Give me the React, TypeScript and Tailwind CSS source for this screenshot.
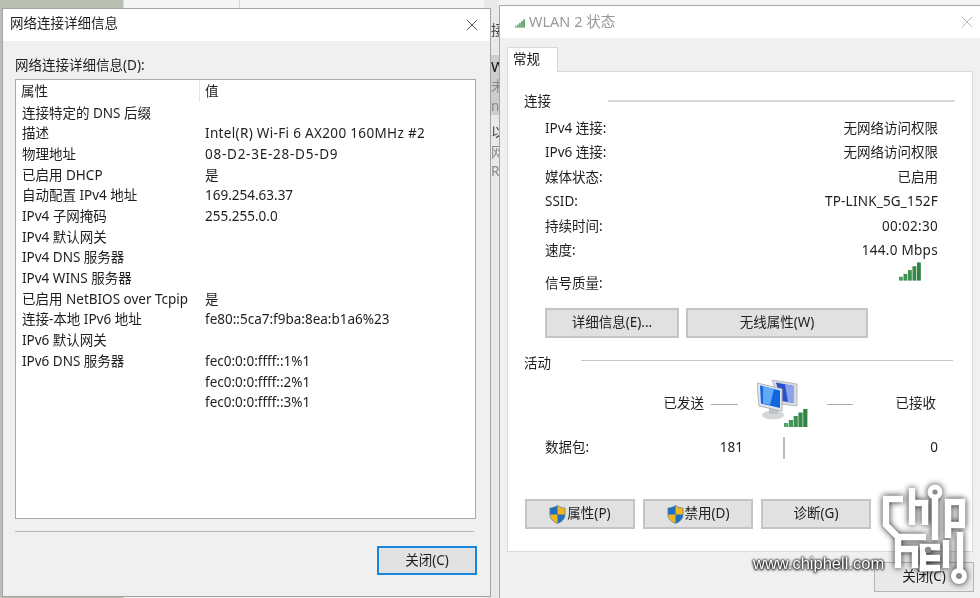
import React from "react";
import { X } from "lucide-react";

// third value: extra letter spacing, the reference's Latin runs a bit wider here
const DETAILS: [string, string, string][] = [
  ["连接特定的 DNS 后缀", "", ""],
  ["描述", "Intel(R) Wi-Fi 6 AX200 160MHz #2", "tracking-[0.33px]"],
  ["物理地址", "08-D2-3E-28-D5-D9", "tracking-[0.75px]"],
  ["已启用 DHCP", "是", ""],
  ["自动配置 IPv4 地址", "169.254.63.37", ""],
  ["IPv4 子网掩码", "255.255.0.0", ""],
  ["IPv4 默认网关", "", ""],
  ["IPv4 DNS 服务器", "", ""],
  ["IPv4 WINS 服务器", "", ""],
  ["已启用 NetBIOS over Tcpip", "是", ""],
  ["连接-本地 IPv6 地址", "fe80::5ca7:f9ba:8ea:b1a6%23", ""],
  ["IPv6 默认网关", "", ""],
  ["IPv6 DNS 服务器", "fec0:0:0:ffff::1%1", ""],
  ["", "fec0:0:0:ffff::2%1", ""],
  ["", "fec0:0:0:ffff::3%1", ""],
];

const STATUS: [string, string, string][] = [
  ["IPv4 连接:", "无网络访问权限", ""],
  ["IPv6 连接:", "无网络访问权限", ""],
  ["媒体状态:", "已启用", ""],
  ["SSID:", "TP-LINK_5G_152F", "tracking-[0.2px]"],
  ["持续时间:", "00:02:30", "tracking-[0.3px]"],
  ["速度:", "144.0 Mbps", "tracking-[0.3px]"],
];

function Bars({ className }: { className: string }) {
  return (
    <svg viewBox="0 0 23 19" className={className}>
      <rect x="0" y="15" width="4" height="4" fill="#4c9a5c" />
      <rect x="4.7" y="12" width="4" height="7" fill="#3f9152" />
      <rect x="9.4" y="8" width="4" height="11" fill="#3f9152" />
      <rect x="14.1" y="4" width="4" height="15" fill="#358a49" />
      <rect x="18.8" y="0" width="4" height="19" fill="#2f8443" />
    </svg>
  );
}

function Shield() {
  return (
    <svg viewBox="0 0 16 18" className="w-[17px] h-[19px] shrink-0">
      <path d="M8 0.5 C6 2 3.5 2.8 0.8 3 V9 C0.8 13 4 16 8 17.5 C12 16 15.2 13 15.2 9 V3 C12.5 2.8 10 2 8 0.5 Z" fill="#f3b71c" stroke="#5a7ea8" strokeWidth="0.7" />
      <path d="M8 0.8 C6 2 3.5 2.8 1 3.1 V9 H8 Z" fill="#1f6fc4" />
      <path d="M8 9 H15 C15 13 12 16 8 17.3 Z" fill="#1f6fc4" />
    </svg>
  );
}

function NetworkIcon() {
  return (
    <svg viewBox="0 0 52 48" className="w-[52px] h-[48px]">
      <path d="M15 0 L40 4 V26 L24 24 Z" fill="#d8dde2" stroke="#b3b9c0" />
      <path d="M19 2.5 L37 6 V23 L24 21 Z" fill="#2c50c8" />
      <path d="M28 4.5 L37 6 V23 L31 22 Z" fill="#8aa5ec" />
      <ellipse cx="16" cy="35" rx="11" ry="4.5" fill="#d4d6d8" />
      <rect x="12" y="27" width="9" height="7" fill="#bfc3c7" />
      <path d="M0 3 L25 9 V31 L2 26 Z" fill="#e3e6ea" stroke="#aeb4bb" />
      <path d="M3 5.5 L23 10.5 V28 L4 23.5 Z" fill="#0f66e0" />
      <path d="M6 6.5 L17 9 L13 25 L6 23.5 Z" fill="#62a9f6" />
      <g transform="translate(27 29)">
        <rect x="0" y="14" width="4.2" height="4" fill="#59a468" />
        <rect x="4.8" y="11" width="4.2" height="7" fill="#46985a" />
        <rect x="9.6" y="7" width="4.2" height="11" fill="#3f9152" />
        <rect x="14.4" y="3.5" width="4.2" height="14.5" fill="#358a49" />
        <rect x="19.2" y="0" width="4.2" height="18" fill="#2f8443" />
      </g>
    </svg>
  );
}

function Logo() {
  return (
    <svg viewBox="0 0 110 128" className="w-[110px] h-[128px] drop-shadow-[0_0_3px_rgba(0,0,0,0.9)]">
      <g fill="none" stroke="#fff" strokeWidth="6.5">
        <path d="M33 29 H16 V55 L28 67 V98" />
        <path d="M42 18 V55 M42 33 H55 V55" />
        <path d="M65 22 V70" />
        <path d="M78 68 V32 H92 V55 H78" />
        <path d="M28 67 H56 M28 79 H45 V98" />
        <path d="M51 88 H70 M70 77 H53 V98 H70" />
        <path d="M76 70 V98" />
        <path d="M90 62 V104" />
      </g>
      <circle cx="65" cy="22" r="7.5" fill="#fff" />
      <circle cx="65" cy="22" r="2.6" fill="#8a8a8a" />
      <circle cx="58" cy="80" r="3.2" fill="#8a8a8a" />
      <circle cx="89" cy="106" r="8" fill="#fff" />
      <circle cx="89" cy="106" r="3" fill="#8a8a8a" />
    </svg>
  );
}

function Btn({ children, className }: { children: React.ReactNode; className: string }) {
  return (
    <div className={`h-[30px] flex items-center justify-center gap-px bg-[#e1e1e1] border-2 border-[#c4c4c4] text-[#222] ${className}`}>
      {children}
    </div>
  );
}

export default function App() {
  return (
    <div className="relative w-[980px] h-[598px] overflow-hidden bg-[#f4f4f4] text-[13.5px] leading-none text-[#1e1e1e] font-['Noto_Sans','Noto_Sans_CJK_SC',sans-serif] blur-[0.35px]">
      {/* desktop behind the two dialogs */}
      <div className="absolute left-0 top-0 w-[124px] h-[598px] border-r border-[#d8d8d8] bg-[#b9c0b2]" />
      <div className="absolute left-[124px] top-0 w-[116px] h-[8px] border-r border-[#d8d8d8]" />
      <div className="absolute left-[484px] top-0 w-[15px] h-[598px] flex flex-col items-start pl-[7px] bg-[#e9e9e9] text-[#444] overflow-hidden">
        <div className="h-[55px] pt-[24px]">接</div>
        <div className="w-[15px] h-[60px] -ml-[7px] pl-[7px] pt-[4px] flex flex-col gap-[6px] bg-[#cdcdcd]">
          <span className="text-[#111] text-[15px]">W</span>
          <span className="text-[#888]">未</span>
          <span className="text-[#888]">nt</span>
        </div>
        <div className="pt-[11px] flex flex-col gap-[6px]">
          <span>以</span>
          <span className="text-[#888]">网</span>
          <span className="text-[#888]">Re</span>
        </div>
      </div>

      {/* 网络连接详细信息 */}
      <div className="absolute left-[2px] top-[8px] w-[489px] h-[589px] flex flex-col bg-[#f0f0f0] border border-[#a3a3a3]">
        <div className="h-[32px] shrink-0 flex items-center justify-between pl-[7px] pr-[8px] bg-white">
          <span className="pb-[2px]">网络连接详细信息</span>
          <X size={20} strokeWidth={1} className="text-[#333]" />
        </div>
        <div className="flex-1 flex flex-col px-[12px]">
          <div className="h-[38px] shrink-0 flex items-end pb-[7px]">网络连接详细信息(D):</div>
          <div className="h-[440px] w-[461px] shrink-0 bg-white border border-[#a9a9a9] flex flex-col">
            <div className="h-[22px] shrink-0 flex items-center">
              <span className="w-[184px] pl-[5px] pt-[2px] border-r border-[#e5e5e5] h-full flex items-center">属性</span>
              <span className="pl-[5px] pt-[2px]">值</span>
            </div>
            <div className="flex flex-col pt-px">
              {DETAILS.map(([k, v, track], i) => (
                <div key={i} className="h-[20.7px] flex items-center">
                  <span className="w-[183px] pl-[6px] whitespace-nowrap">{k}</span>
                  <span className={`pl-[6px] whitespace-nowrap ${track}`}>{v}</span>
                </div>
              ))}
            </div>
          </div>
          <div className="w-[459px] h-px mt-[12px] bg-[#b5b5b5]" />
          <div className="flex justify-end mt-[14px] w-[462px]">
            <div className="w-[100px] h-[29px] flex items-center justify-center bg-[#e1e1e1] border-2 border-[#1a85dc]">关闭(C)</div>
          </div>
        </div>
      </div>

      {/* WLAN 2 状态 */}
      <div className="absolute left-[499px] top-[5px] w-[490px] h-[600px] flex flex-col bg-[#f0f0f0] border border-[#a8a8a8]">
        <div className="h-[32px] shrink-0 flex items-center justify-between pl-[15px] pr-[15px] bg-white text-[#999]">
          <span className="flex items-center gap-[4px] pb-[2px]">
            <Bars className="w-[10px] h-[9px] opacity-80 mt-[5px]" />
            <span className="text-[14.5px]">WLAN 2 状态</span>
          </span>
          <X size={20} strokeWidth={1} className="text-[#aaa] mr-[-4px]" />
        </div>
        <div className="flex flex-col pl-[7px] pt-[9px]">
          <div className="w-[51px] h-[25px] -mb-px z-10 flex items-center pl-[5px] bg-white border border-b-0 border-[#d9d9d9]">常规</div>
          <div className="w-[466px] h-[481px] bg-white border border-[#d9d9d9] flex flex-col pl-[16px]">
            <div className="h-[29px] mt-[15px] flex items-start">
              <span className="pt-[8px] w-[84px]">连接</span>
              <div className="w-[347px] h-[2px] mt-[13px] bg-[#d8d8d8]" />
            </div>
            <div className="flex flex-col pl-[21px] w-[414px]">
              {STATUS.map(([k, v, track]) => (
                <div key={k} className="h-[24.5px] flex items-center justify-between">
                  <span>{k}</span>
                  <span className={track}>{v}</span>
                </div>
              ))}
              <div className="h-[32px] flex justify-between">
                <span className="pt-[14px]">信号质量:</span>
                <Bars className="w-[22px] h-[19px] mr-[17px] -mt-px" />
              </div>
              <div className="flex gap-[7px] mt-[13px]">
                <Btn className="w-[134px]">详细信息(E)...</Btn>
                <Btn className="w-[182px]">无线属性(W)</Btn>
              </div>
            </div>
            <div className="h-[20px] mt-[16px] flex items-center">
              <span className="w-[57px]">活动</span>
              <div className="w-[372px] h-px -mt-[8px] bg-[#c8c8c8]" />
            </div>
            <div className="flex items-center h-[48px] ml-[21px] w-[393px] mt-[6px]">
              <span className="w-[159px] text-right">已发送</span>
              <div className="w-[27px] h-px ml-[7px] bg-[#aaa]" />
              <div className="ml-[19px]"><NetworkIcon /></div>
              <div className="w-[26px] h-px ml-[18px] bg-[#aaa]" />
              <span className="ml-auto mr-[2px]">已接收</span>
            </div>
            <div className="flex items-center h-[24px] ml-[21px] w-[393px] mt-[8px]">
              <span className="w-[198px] text-left">数据包:</span>
              <span className="w-0 flex justify-end">181</span>
              <div className="w-[2px] h-[22px] ml-[40px] bg-[#bbb]" />
              <span className="ml-auto">0</span>
            </div>
            <div className="flex gap-[8px] mt-[39px] pl-px">
              <Btn className="w-[110px]"><Shield />属性(P)</Btn>
              <Btn className="w-[110px]"><Shield />禁用(D)</Btn>
              <Btn className="w-[110px]">诊断(G)</Btn>
            </div>
          </div>
          <div className="self-start ml-[367px] mt-[10px] w-[100px] h-[30px] flex items-center justify-center bg-[#e9e9e9] border border-[#b5b5b5]">关闭(C)</div>
        </div>
      </div>

      {/* site watermark */}
      <div className="absolute left-[753px] top-[555px] text-[16.5px] font-['Liberation_Sans',sans-serif] text-white [text-shadow:0_0_3px_#000,0_0_2px_#000,0_1px_3px_#000]">www.chiphell.com</div>
      <div className="absolute left-[870px] top-[470px]"><Logo /></div>
    </div>
  );
}
